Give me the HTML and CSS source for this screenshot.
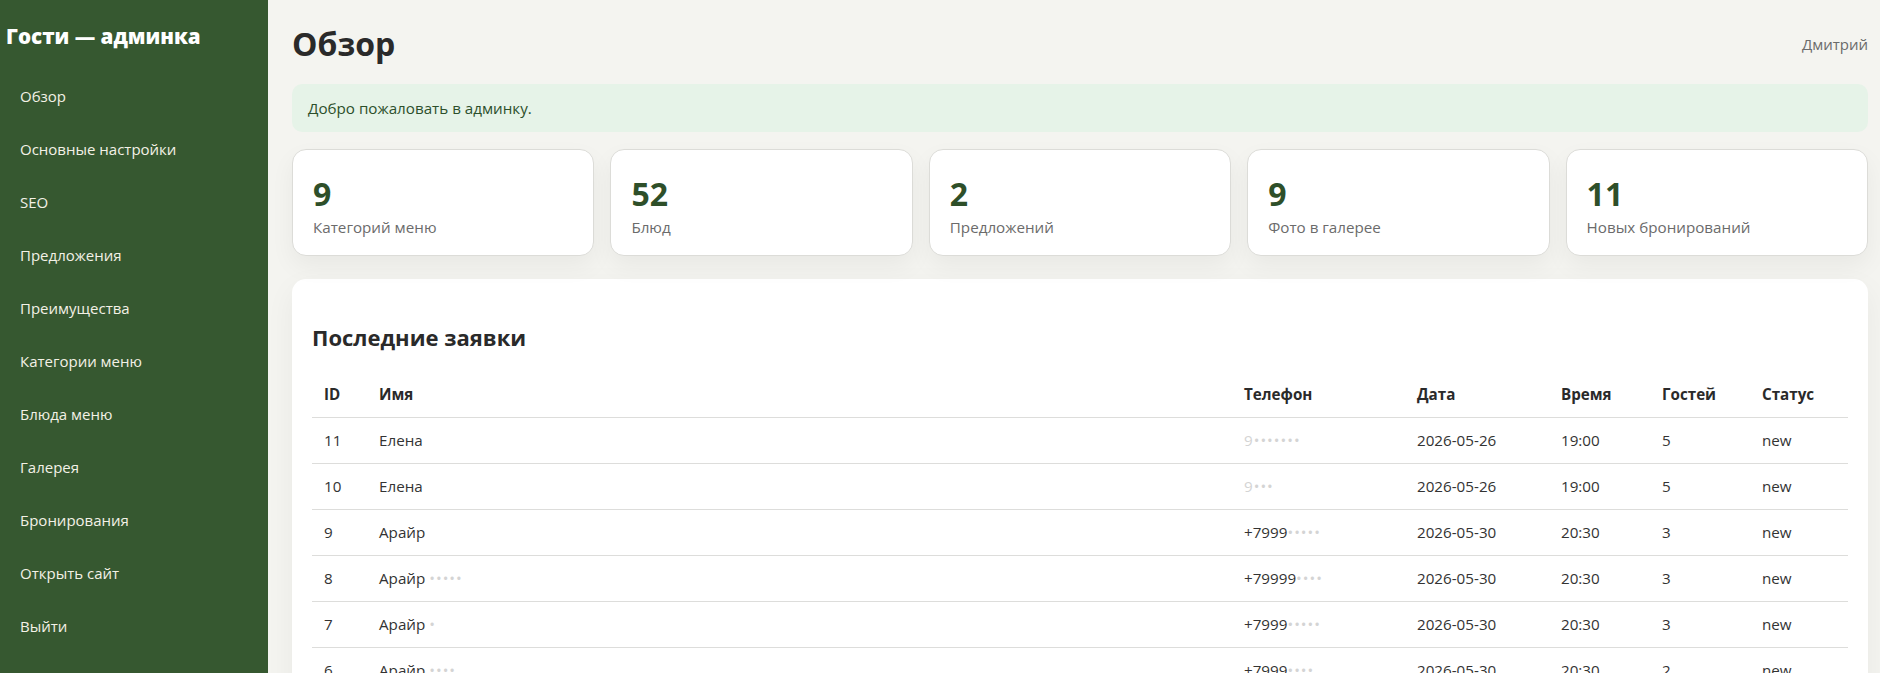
FILE: index.html
```html
<!DOCTYPE html>
<html lang="ru">
<head>
<meta charset="utf-8">
<title>Обзор — Гости</title>
<link rel="stylesheet" href="styles.css">
</head>
<body>
<div class="layout">
  <aside class="sidebar">
    <div class="brand">Гости — админка</div>
    <nav class="nav">
      <a class="nav-link" href="#">Обзор</a>
      <a class="nav-link" href="#">Основные настройки</a>
      <a class="nav-link" href="#">SEO</a>
      <a class="nav-link" href="#">Предложения</a>
      <a class="nav-link" href="#">Преимущества</a>
      <a class="nav-link" href="#">Категории меню</a>
      <a class="nav-link" href="#">Блюда меню</a>
      <a class="nav-link" href="#">Галерея</a>
      <a class="nav-link" href="#">Бронирования</a>
      <a class="nav-link" href="#">Открыть сайт</a>
      <a class="nav-link" href="#">Выйти</a>
    </nav>
  </aside>

  <main class="main">
    <header class="topbar">
      <h1 class="page-title">Обзор</h1>
      <span class="user">Дмитрий</span>
    </header>

    <div class="alert">Добро пожаловать в админку.</div>

    <section class="stats">
      <div class="stat"><div class="stat-value">9</div><div class="stat-label">Категорий меню</div></div>
      <div class="stat"><div class="stat-value">52</div><div class="stat-label">Блюд</div></div>
      <div class="stat"><div class="stat-value">2</div><div class="stat-label">Предложений</div></div>
      <div class="stat"><div class="stat-value">9</div><div class="stat-label">Фото в галерее</div></div>
      <div class="stat"><div class="stat-value">11</div><div class="stat-label">Новых бронирований</div></div>
    </section>

    <section class="panel">
      <h2 class="panel-title">Последние заявки</h2>
      <table class="table">
        <colgroup>
          <col class="col-id"><col class="col-name"><col class="col-phone"><col class="col-date"><col class="col-time"><col class="col-guests"><col class="col-status">
        </colgroup>
        <thead>
          <tr><th>ID</th><th>Имя</th><th>Телефон</th><th>Дата</th><th>Время</th><th>Гостей</th><th>Статус</th></tr>
        </thead>
        <tbody>
          <tr><td>11</td><td>Елена</td><td><span class="masked">9•••••••</span></td><td>2026-05-26</td><td>19:00</td><td>5</td><td>new</td></tr>
          <tr><td>10</td><td>Елена</td><td><span class="masked">9•••</span></td><td>2026-05-26</td><td>19:00</td><td>5</td><td>new</td></tr>
          <tr><td>9</td><td>Арайр</td><td>+7999<span class="masked">•••••</span></td><td>2026-05-30</td><td>20:30</td><td>3</td><td>new</td></tr>
          <tr><td>8</td><td>Арайр <span class="masked">•••••</span></td><td>+79999<span class="masked">••••</span></td><td>2026-05-30</td><td>20:30</td><td>3</td><td>new</td></tr>
          <tr><td>7</td><td>Арайр <span class="masked">•</span></td><td>+7999<span class="masked">•••••</span></td><td>2026-05-30</td><td>20:30</td><td>3</td><td>new</td></tr>
          <tr><td>6</td><td>Арайр <span class="masked">••••</span></td><td>+7999<span class="masked">••••</span></td><td>2026-05-30</td><td>20:30</td><td>2</td><td>new</td></tr>
        </tbody>
      </table>
    </section>
  </main>
</div>
</body>
</html>
```

FILE: styles.css
```css
* {
  box-sizing: border-box;
}

html {
  background: #ffffff;
}

body {
  margin: 0;
  font-family: "Open Sans", "Noto Sans", sans-serif;
  color: #2b2b2b;
}

.layout {
  display: flex;
  height: 673px;
  overflow: hidden;
  background: #f4f4f0;
}

.sidebar {
  flex: 0 0 268px;
  background: #365830;
  color: #ffffff;
}

.brand {
  padding: 22px 0 0 6px;
  font-size: 20.6px;
  line-height: 28px;
  font-weight: 800;
  white-space: nowrap;
}

.nav {
  display: flex;
  flex-direction: column;
  margin-top: 20px;
}

.nav-link {
  display: block;
  height: 53px;
  line-height: 53px;
  padding-left: 20px;
  font-size: 15px;
  color: #f3f1e6;
  text-decoration: none;
}

.main {
  flex: 1;
  min-width: 0;
  padding: 24px 12px 0 24px;
  overflow: hidden;
}

.topbar {
  display: flex;
  justify-content: space-between;
  align-items: center;
  height: 40px;
}

.page-title {
  margin: 0;
  font-size: 32px;
  line-height: 40px;
  font-weight: 700;
  color: #2a2a2a;
}

.user {
  font-size: 15px;
  color: #6b6b6b;
}

.alert {
  margin-top: 20px;
  padding: 12px 16px;
  line-height: 24px;
  font-size: 15.2px;
  background: #e6f3e8;
  color: #2c4f2b;
  border-radius: 10px;
}

.stats {
  display: grid;
  grid-template-columns: repeat(5, 1fr);
  gap: 16px;
  margin-top: 17px;
}

.stat {
  background: #ffffff;
  border: 1px solid #dcdcd8;
  border-radius: 14px;
  padding: 24px 20px 17px;
  box-shadow: 0 10px 24px rgba(0, 0, 0, 0.05);
}

.stat-value {
  font-size: 32px;
  line-height: 40px;
  font-weight: 700;
  color: #2e4f29;
}

.stat-label {
  margin-top: 2px;
  font-size: 15.2px;
  line-height: 22px;
  color: #6b6b6b;
}

.panel {
  margin-top: 23px;
  background: #ffffff;
  border-radius: 14px;
  padding: 20px 20px 20px;
  box-shadow: 0 10px 30px rgba(0, 0, 0, 0.05);
}

.panel-title {
  margin: 23px 0 20px;
  font-size: 22px;
  line-height: 30px;
  font-weight: 700;
  color: #2a2a2a;
}

.table {
  width: 100%;
  border-collapse: collapse;
  table-layout: fixed;
  font-size: 15.2px;
}

.col-id { width: 55px; }
.col-phone { width: 173px; }
.col-date { width: 144px; }
.col-time { width: 101px; }
.col-guests { width: 100px; }
.col-status { width: 98px; }

.table th,
.table td {
  padding: 12px;
  line-height: 21px;
  text-align: left;
  border-bottom: 1px solid #dddddb;
  white-space: nowrap;
}

.table th {
  font-weight: 700;
  color: #2a2a2a;
}

.table td {
  color: #333333;
}

/* personal data is hidden behind a soft mask */
.masked {
  color: #d4d4d4;
  letter-spacing: 1px;
}
```
